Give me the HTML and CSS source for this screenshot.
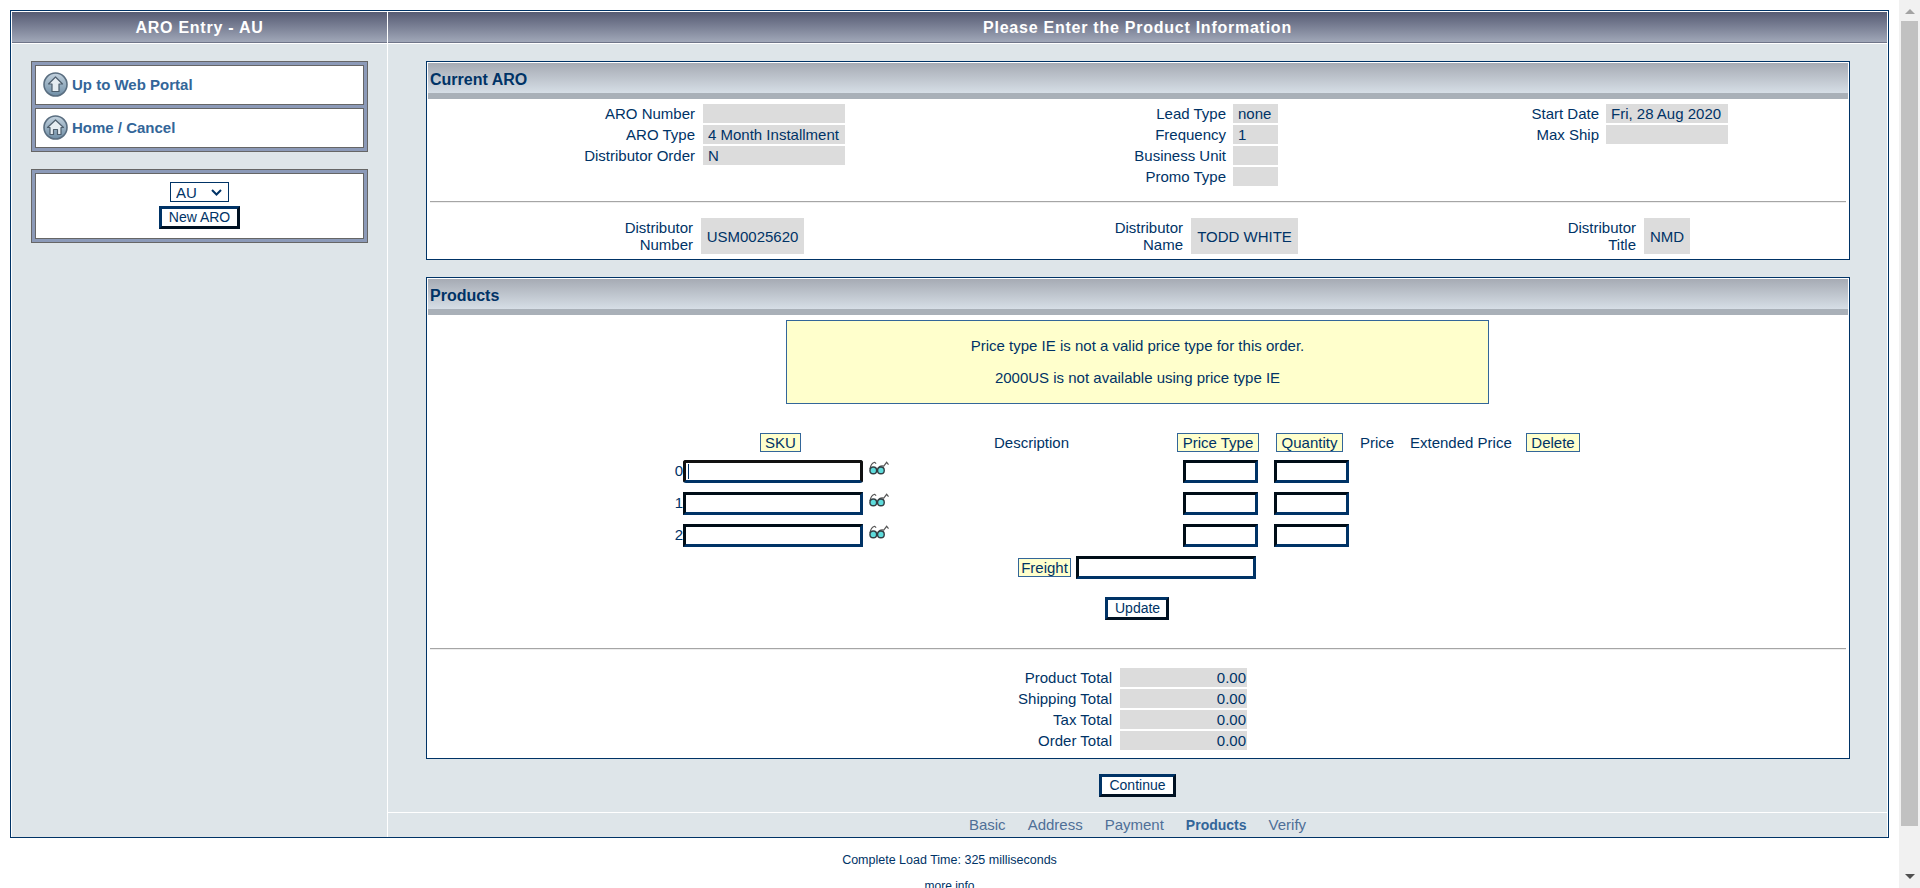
FILE: index.html
```html
<!DOCTYPE html>
<html lang="en">
<head>
  <meta charset="UTF-8">
  <title>ARO Entry - AU</title>
  <link rel="stylesheet" href="styles.css">
</head>
<body>

<div class="frame">
  <!-- left column -->
  <div class="side">
    <div class="title-bar">ARO Entry - AU</div>
    <div class="side-box nav-box">
      <a class="nav-link" href="#">
        <svg class="nav-icon" viewBox="0 0 25 25">
          <defs>
            <linearGradient id="ball" x1="0" y1="0" x2="0" y2="1">
              <stop offset="0" stop-color="#c3d2de"/>
              <stop offset="1" stop-color="#6f8ea6"/>
            </linearGradient>
          </defs>
          <circle cx="12.5" cy="12.5" r="11.5" fill="url(#ball)" stroke="#5a6e80" stroke-width="1.6"/>
          <path d="M12.5 5 L19.5 12 H16 V19.5 H9 V12 H5.5 Z" fill="#e6edf2" stroke="#4e5f6e" stroke-width="1.2" stroke-linejoin="round"/>
        </svg>
        Up to Web Portal
      </a>
      <a class="nav-link" href="#">
        <svg class="nav-icon" viewBox="0 0 25 25">
          <circle cx="12.5" cy="12.5" r="11.5" fill="url(#ball)" stroke="#5a6e80" stroke-width="1.6"/>
          <path d="M12.5 5 L20.5 12.5 H18 V19.5 H14.5 V14.5 H10.5 V19.5 H7 V12.5 H4.5 Z" fill="#e6edf2" stroke="#4e5f6e" stroke-width="1.2" stroke-linejoin="round"/>
        </svg>
        Home / Cancel
      </a>
    </div>
    <div class="side-box side-box-aro">
      <div class="new-aro">
        <select class="country"><option>AU</option></select>
        <button class="btn" type="button">New ARO</button>
      </div>
    </div>
  </div>

  <!-- main column -->
  <div class="main">
    <div class="title-bar">Please Enter the Product Information</div>

    <div class="panel panel-aro">
      <div class="panel-head">Current ARO</div>
      <div class="info-row">
        <div class="info-col col-a">
          <span class="lbl">ARO Number</span><span class="val"></span>
          <span class="lbl">ARO Type</span><span class="val">4 Month Installment</span>
          <span class="lbl">Distributor Order</span><span class="val">N</span>
        </div>
        <div class="info-col col-b">
          <span class="lbl">Lead Type</span><span class="val">none</span>
          <span class="lbl">Frequency</span><span class="val">1</span>
          <span class="lbl">Business Unit</span><span class="val"></span>
          <span class="lbl">Promo Type</span><span class="val"></span>
        </div>
        <div class="info-col col-c">
          <span class="lbl">Start Date</span><span class="val">Fri, 28 Aug 2020</span>
          <span class="lbl">Max Ship</span><span class="val"></span>
        </div>
      </div>
      <div class="rule rule-aro"></div>
      <div class="dist-row">
        <div class="dist dist-a"><span class="dist-lbl">Distributor<br>Number</span><span class="dist-val">USM0025620</span></div>
        <div class="dist dist-b"><span class="dist-lbl">Distributor<br>Name</span><span class="dist-val">TODD WHITE</span></div>
        <div class="dist dist-c"><span class="dist-lbl">Distributor<br>Title</span><span class="dist-val">NMD</span></div>
      </div>
    </div>

    <div class="panel panel-products">
      <div class="panel-head">Products</div>
      <div class="notice">
        <p>Price type IE is not a valid price type for this order.</p>
        <p>2000US is not available using price type IE</p>
      </div>

      <div class="sku-grid">
        <span></span>
        <span class="tag tag-sku">SKU</span>
        <span class="head-text head-desc">Description</span>
        <span class="tag tag-price">Price Type</span>
        <span class="tag tag-qty">Quantity</span>
        <span class="head-text">Price</span>
        <span class="head-text">Extended Price</span>
        <span class="tag tag-delete">Delete</span>

        <span class="row-num">0</span>
        <span class="sku-cell"><input class="field field-sku field-focus" type="text"><span class="caret"></span><svg class="look"><use href="#glasses"/></svg></span>
        <span></span>
        <input class="field field-sm field-price" type="text">
        <input class="field field-sm" type="text">
        <span></span><span></span><span></span>

        <span class="row-num">1</span>
        <span class="sku-cell"><input class="field field-sku" type="text"><svg class="look"><use href="#glasses"/></svg></span>
        <span></span>
        <input class="field field-sm field-price" type="text">
        <input class="field field-sm" type="text">
        <span></span><span></span><span></span>

        <span class="row-num">2</span>
        <span class="sku-cell"><input class="field field-sku" type="text"><svg class="look"><use href="#glasses"/></svg></span>
        <span></span>
        <input class="field field-sm field-price" type="text">
        <input class="field field-sm" type="text">
        <span></span><span></span><span></span>
      </div>

      <div class="freight-row">
        <span class="tag tag-freight">Freight</span>
        <input class="field field-freight" type="text">
      </div>
      <button class="btn btn-update" type="button">Update</button>

      <div class="rule rule-products"></div>

      <div class="totals">
        <span class="lbl">Product Total</span><span class="val val-num">0.00</span>
        <span class="lbl">Shipping Total</span><span class="val val-num">0.00</span>
        <span class="lbl">Tax Total</span><span class="val val-num">0.00</span>
        <span class="lbl">Order Total</span><span class="val val-num">0.00</span>
      </div>
    </div>

    <div class="continue-row"><button class="btn" type="button">Continue</button></div>

    <div class="steps">
      <a href="#">Basic</a>
      <a href="#">Address</a>
      <a href="#">Payment</a>
      <a class="current" href="#">Products</a>
      <a href="#">Verify</a>
    </div>
  </div>
</div>

<div class="footer">
  <div class="load-time">Complete Load Time: 325 milliseconds</div>
  <div class="more"><a href="#">more info</a></div>
</div>

<!-- page scrollbar -->
<div class="scrollbar">
  <span class="arrow arrow-up"></span>
  <span class="thumb"></span>
  <span class="arrow arrow-down"></span>
</div>

<svg class="defs" width="0" height="0">
  <symbol id="glasses" viewBox="0 0 21 14">
    <path d="M1 8 Q2 2 6 1 L7.5 2.5 M9.5 8 Q11 4 15.5 5 L18.5 1 L20.5 3.5" fill="none" stroke="#555" stroke-width="1.2"/>
    <circle cx="4.5" cy="9.5" r="3.5" fill="#5fdcdc" stroke="#333f44" stroke-width="1.5"/>
    <circle cx="12.5" cy="9.5" r="3.5" fill="#5fdcdc" stroke="#333f44" stroke-width="1.5"/>
  </symbol>
</svg>

</body>
</html>
```

FILE: styles.css
```css
html {
  overflow: hidden;
  height: 100%;
}

body {
  margin: 0;
  padding: 10px 31px 0 10px;
  height: 888px;
  box-sizing: border-box;
  overflow: hidden;
  background: #fff;
  font-family: "Liberation Sans", Arial, sans-serif;
  font-size: 15px;
  color: #003366;
}

a {
  text-decoration: none;
}

.frame {
  display: flex;
  height: 828px;
  box-sizing: border-box;
  border: 1px solid #003366;
  padding: 1px 1px 0;
  background: #fff;
}

.title-bar {
  height: 31px;
  line-height: 32px;
  box-sizing: border-box;
  border-bottom: 1px solid #6f7589;
  box-shadow: 0 1px 0 #fff;
  background: linear-gradient(to bottom, #565b73, #a0a7b8);
  color: #fff;
  font-size: 16px;
  font-weight: bold;
  letter-spacing: 0.75px;
  text-align: center;
}

.side {
  width: 375px;
  flex: none;
  border-right: 1px solid #fff;
  background: #dee5e9;
}

.side-box {
  width: 329px;
  margin: 18px 0 0 19px;
  box-sizing: content-box;
  border: 1px solid #666;
  padding: 3px;
  background: #8c9ab8;
}

.side-box-aro {
  margin-top: 17px;
}

.nav-box {
  display: flex;
  flex-direction: column;
  gap: 3px;
}

.nav-link {
  display: flex;
  align-items: center;
  gap: 4px;
  height: 40px;
  box-sizing: border-box;
  padding: 0 0 2px 7px;
  border: 1px solid #666;
  background: #fff;
  color: #336699;
  font-weight: bold;
}

.nav-icon {
  width: 25px;
  height: 25px;
}

.new-aro {
  display: flex;
  flex-direction: column;
  align-items: center;
  gap: 4px;
  height: 66px;
  box-sizing: border-box;
  padding-top: 8px;
  border: 1px solid #666;
  background: #fff;
}

.country {
  width: 59px;
  height: 20px;
  padding: 0 0 0 5px;
  border: 1px solid #003366;
  border-radius: 0;
  appearance: none;
  background: #fff url("data:image/svg+xml,%3Csvg xmlns='http://www.w3.org/2000/svg' width='11' height='7'%3E%3Cpath d='M1 1 L5.5 5.5 L10 1' fill='none' stroke='%23003366' stroke-width='2'/%3E%3C/svg%3E") no-repeat right 6px center;
  color: #003366;
  font: 15px "Liberation Sans", Arial, sans-serif;
}

.btn {
  display: block;
  height: 23px;
  box-sizing: border-box;
  padding: 0 7px;
  border: 3px solid;
  border-color: #003366 #001122 #001122 #003366;
  background: #fff;
  color: #003366;
  font: 14px/17px "Liberation Sans", Arial, sans-serif;
}

.main {
  flex: 1;
  min-width: 0;
  background: #dee5e9;
}

.panel {
  width: 1424px;
  margin-left: 38px;
  box-sizing: border-box;
  border: 1px solid #003366;
  padding: 1px;
  background: #fff;
}

.panel-aro {
  height: 199px;
  margin-top: 18px;
}

.panel-products {
  height: 482px;
  margin-top: 17px;
}

.panel-head {
  height: 36px;
  box-sizing: border-box;
  padding-left: 2px;
  line-height: 34px;
  border-bottom: 6px solid #a9b0b8;
  background: linear-gradient(to bottom, #a6abb4, #d6dee6);
  font-size: 16px;
  font-weight: bold;
}

.info-row {
  display: flex;
  margin-top: 5px;
  height: 82px;
}

.info-col {
  display: grid;
  grid-auto-rows: 19px;
  row-gap: 2px;
  line-height: 19px;
}

.col-a {
  grid-template-columns: 267px 142px;
  column-gap: 8px;
}

.col-b {
  grid-template-columns: 381px 45px;
  column-gap: 7px;
}

.col-c {
  grid-template-columns: 321px 122px;
  column-gap: 7px;
}

.lbl {
  text-align: right;
}

.val {
  padding-left: 5px;
  background: #dcdcdc;
}

.rule {
  height: 1px;
  margin: 0 2px;
  background: #a5a5a5;
  box-shadow: 0 1px 0 #eee;
}

.rule-aro {
  margin-top: 15px;
}

.dist-row {
  display: flex;
  margin-top: 16px;
}

.dist {
  display: flex;
  gap: 8px;
  height: 36px;
  justify-content: flex-end;
}

.dist-a {
  width: 376px;
}

.dist-b {
  width: 494px;
}

.dist-c {
  width: 392px;
}

.dist-lbl {
  text-align: right;
  line-height: 17px;
  padding-top: 1px;
}

.dist-val {
  display: flex;
  align-items: center;
  justify-content: center;
  background: #dcdcdc;
}

.dist-a .dist-val {
  width: 103px;
}

.dist-b .dist-val {
  width: 107px;
}

.dist-c .dist-val {
  width: 46px;
}

.notice {
  width: 703px;
  height: 84px;
  box-sizing: border-box;
  margin: 5px 0 0 358px;
  padding-top: 16px;
  border: 1px solid #336699;
  background: #ffffcc;
  text-align: center;
  line-height: 17px;
}

.notice p {
  margin: 0 0 15px;
}

.sku-grid {
  display: grid;
  grid-template-columns: 13px 206px 288px 97px 86px 50px 116px 54px;
  grid-template-rows: 18px repeat(3, 23px);
  row-gap: 9px;
  margin: 29px 0 0 242px;
  line-height: 17px;
}

.tag {
  justify-self: start;
  height: 19px;
  box-sizing: border-box;
  border: 1px solid #336699;
  background: #ffffcc;
  text-align: center;
}

.tag-sku {
  width: 41px;
  margin-left: 77px;
}

.tag-price {
  width: 82px;
}

.tag-qty {
  width: 67px;
  margin-left: 2px;
}

.tag-delete {
  width: 54px;
}

.tag-freight {
  width: 53px;
}

.head-text {
  padding-top: 1px;
  white-space: nowrap;
}

.head-desc {
  margin-left: 105px;
}

.row-num {
  text-align: right;
  line-height: 22px;
}

.sku-cell {
  position: relative;
  display: flex;
  align-items: flex-start;
  gap: 6px;
}

.field {
  display: block;
  height: 23px;
  box-sizing: border-box;
  padding: 0;
  border: 3px solid;
  border-color: #000d17 #003366 #003366 #000d17;
  background: #fff;
}

.field-sku {
  width: 180px;
}

.field-focus {
  border-radius: 3px;
  border-color: #111 #111 #003366 #111;
}

.caret {
  position: absolute;
  left: 5px;
  top: 4px;
  width: 1px;
  height: 15px;
  background: #003366;
}

.field-sm {
  width: 75px;
}

.field-price {
  margin-left: 6px;
}

.field-freight {
  width: 180px;
}

.look {
  width: 21px;
  height: 14px;
  margin-top: 1px;
}

.freight-row {
  display: flex;
  align-items: center;
  gap: 5px;
  margin: 9px 0 0 590px;
  line-height: 17px;
}

.btn-update {
  width: 64px;
  margin: 18px 0 0 677px;
}

.rule-products {
  margin-top: 28px;
}

.totals {
  display: grid;
  grid-template-columns: 127px 127px;
  grid-auto-rows: 19px;
  row-gap: 2px;
  column-gap: 8px;
  margin: 19px 0 0 557px;
  line-height: 19px;
}

.val-num {
  padding: 0 1px 0 0;
  text-align: right;
}

.continue-row {
  display: flex;
  justify-content: center;
  margin-top: 15px;
  height: 38px;
  border-bottom: 1px solid #fff;
}

.steps {
  display: flex;
  justify-content: center;
  align-items: baseline;
  gap: 22px;
  height: 23px;
  line-height: 22px;
  padding-top: 1px;
  box-sizing: border-box;
}

.steps a {
  color: #4f6f97;
}

.steps a.current {
  color: #336699;
  font-size: 14px;
  font-weight: bold;
}

.footer {
  margin-top: 14px;
  text-align: center;
  font-size: 12px;
  line-height: 16px;
}

.load-time {
  font-size: 12.5px;
}

.more {
  margin-top: 10px;
}

.more a {
  color: #003366;
}

.scrollbar {
  position: fixed;
  top: 0;
  right: 0;
  bottom: 0;
  width: 21px;
  display: flex;
  flex-direction: column;
  align-items: center;
  background: #f1f1f1;
}

.arrow {
  width: 0;
  height: 0;
  margin: 9px 0 7px;
  border-left: 5px solid transparent;
  border-right: 5px solid transparent;
}

.arrow-up {
  border-bottom: 5px solid #a3a3a3;
}

.arrow-down {
  margin-top: auto;
  margin-bottom: 9px;
  border-top: 5px solid #505050;
}

.thumb {
  width: 17px;
  height: 805px;
  background: #c1c1c1;
}

.defs {
  position: absolute;
}
```
